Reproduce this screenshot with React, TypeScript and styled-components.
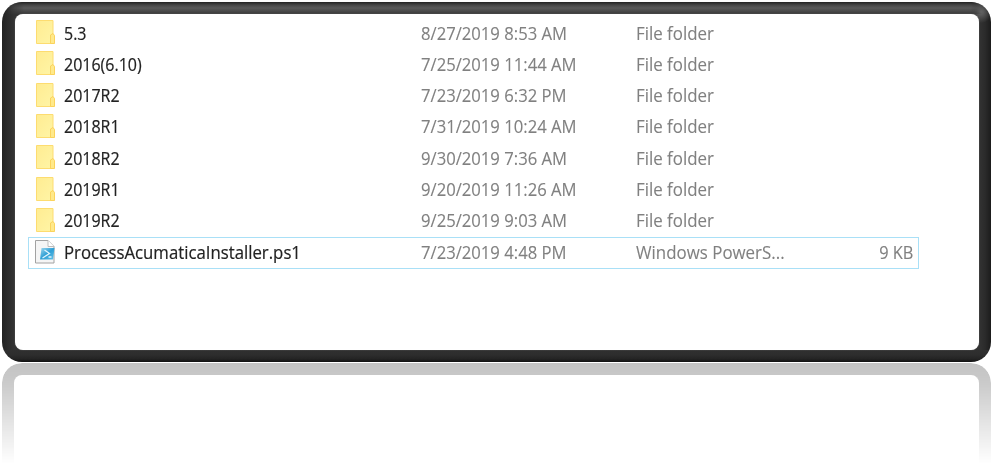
import React from 'react';
import styled, { createGlobalStyle } from 'styled-components';

const Global = createGlobalStyle`
  * { box-sizing: border-box; }
  body { margin: 0; background: #fff; overflow: hidden; }
`;

const Page = styled.main`
  width: 994px;
  height: 464px;
  padding: 2px 3px 0 2px;
  overflow: hidden;
  font-family: "Open Sans", "Noto Sans", sans-serif;
`;

const Frame = styled.section`
  position: relative;
  overflow: hidden;
  height: 360px;
  padding: 12px 12px 12px 12.5px;
  border-radius: 20px;
  background:
    radial-gradient(circle 11px at calc(100% - 10px) 10px, #686868, rgba(90, 90, 90, 0)),
    linear-gradient(to top, #101010 0, #242424 3px, #2d2d2d 7px, #303030 12px, transparent 12px),
    linear-gradient(to right, #222 0, #2b2b2b 6px, #333 12px, #333 50%, #333 calc(100% - 12px), #2b2b2b calc(100% - 6px), #1c1c1c 100%);

  /* lit upper bevel, faded out into both corners */
  &::before {
    content: "";
    position: absolute;
    inset: 0 0 auto;
    height: 12px;
    background: linear-gradient(#222 0, #474747 3px, #5a5a5a 6px, #4a4a4a 9px, #383838 12px);
    mask-image: linear-gradient(to right, transparent 5px, #000 22px, #000 calc(100% - 20px), transparent calc(100% - 8px));
  }
`;

const Screen = styled.div`
  position: relative;
  height: 336px;
  padding: 3.5px 0 0 13.5px;
  border-radius: 8px;
  background: #fff;
  box-shadow: 0 0 1px 0 #999;
`;

const Row = styled.div<{ $selected?: boolean }>`
  display: grid;
  grid-template-columns: 36px 357px 215px 180px 1fr;
  align-items: center;
  width: 891px;
  height: ${p => (p.$selected ? 32 : 31.3)}px;
  padding-right: 6px;
  box-shadow: ${p => (p.$selected ? 'inset 0 0 0 1px #a9e0f7' : 'none')};
`;

const IconCell = styled.div`
  padding-left: 7px;
  height: 28px;
`;

const Cell = styled.span<{ $dark?: boolean; $right?: boolean; $scale: number }>`
  font-size: 17.4px;
  line-height: 26px;
  padding-bottom: 1.2px;
  white-space: nowrap;
  color: ${p => (p.$dark ? '#222' : '#808080')};
  -webkit-text-stroke: ${p => (p.$dark ? 0.2 : 0.1)}px currentColor;
  justify-self: ${p => (p.$right ? 'end' : 'start')};
  transform: scaleX(${p => p.$scale});
  transform-origin: ${p => (p.$right ? 'right' : 'left')};
`;

const Reflection = styled.div`
  height: 101px;
  margin-top: 1px;
  border: 12.5px solid #c3c3c3;
  border-bottom: 0;
  border-radius: 20px 20px 0 0;
  filter: blur(0.5px);
  mask-image: linear-gradient(#000, rgba(0, 0, 0, .88) 20%, transparent);
`;

const Folder = () => (
  <svg width="20" height="26" viewBox="0 0 20 26">
    <defs>
      <linearGradient id="paper" x2="1" y2="1">
        <stop stopColor="#ffec92" />
        <stop offset="1" stopColor="#fff5a6" />
      </linearGradient>
    </defs>
    <path d="M1.500 1.500h16.500v13.500l1 2v7.500h-17.500z" fill="url(#paper)" stroke="#fddc70" />
    <path d="M15.500 24.500v-8.500l2.500-1.500 1.500 2v8z" fill="#ffe98a" stroke="#fbd35c" />
  </svg>
);

const Script = () => (
  <svg width="22" height="26" viewBox="0 0 22 26">
    <defs>
      <linearGradient id="screen" x2="1" y2="1">
        <stop stopColor="#a0d8ee" />
        <stop offset=".5" stopColor="#2f9fd5" />
        <stop offset="1" stopColor="#64c3e9" />
      </linearGradient>
    </defs>
    <path d="M.5 1.500h12.500l6 6v16.500h-18.500z" fill="#f5f5f5" stroke="#a2a2a2" />
    <path d="M13 1.500v6h6" fill="#fff" stroke="#bdbdbd" />
    <path d="M6.500 9h13l-1.500 11.500h-13z" fill="url(#screen)" />
    <path d="M9.500 11l5 3.500-7 4.500M13.500 18h3" fill="none" stroke="#dff4fc" strokeWidth="1.300" />
  </svg>
);

type Entry = { name: string; date: string; type: string; size?: string };
const folder = (name: string, date: string): Entry => ({ name, date, type: 'File folder' });
const entries: Entry[] = [
  folder('5.3', '8/27/2019 8:53 AM'),
  folder('2016(6.10)', '7/25/2019 11:44 AM'),
  folder('2017R2', '7/23/2019 6:32 PM'),
  folder('2018R1', '7/31/2019 10:24 AM'),
  folder('2018R2', '9/30/2019 7:36 AM'),
  folder('2019R1', '9/20/2019 11:26 AM'),
  folder('2019R2', '9/25/2019 9:03 AM'),
  { name: 'ProcessAcumaticaInstaller.ps1', date: '7/23/2019 4:48 PM', type: 'Windows PowerS...', size: '9 KB' },
];

export default function App() {
  return (
    <Page>
      <Global />
      <Frame>
        <Screen>
          {entries.map(e => (
            <Row key={e.name} $selected={!!e.size}>
              <IconCell>{e.size ? <Script /> : <Folder />}</IconCell>
              <Cell $dark $scale={e.size ? 0.964 : 0.92}>{e.name}</Cell>
              <Cell $scale={0.958}>{e.date}</Cell>
              <Cell $scale={0.971}>{e.type}</Cell>
              {e.size && <Cell $right $scale={0.94}>{e.size}</Cell>}
            </Row>
          ))}
        </Screen>
      </Frame>
      <Reflection />
    </Page>
  );
}
